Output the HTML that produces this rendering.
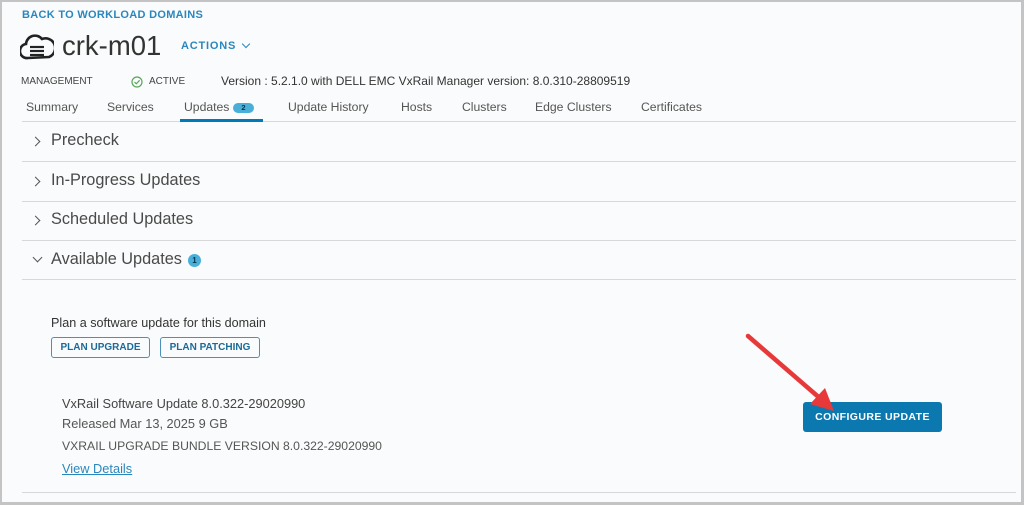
<!DOCTYPE html>
<html><head><style>
*{margin:0;padding:0;box-sizing:border-box}
body{width:1024px;height:505px;overflow:hidden;background:#fafbfc;font-family:"Liberation Sans",sans-serif;color:#444;position:relative}
.frame{position:absolute;left:0;top:0;width:1024px;height:505px;border:2px solid #c4c4c4;border-right-width:3px;border-bottom-width:3px}
.a{position:absolute;white-space:nowrap}
.line{position:absolute;left:22px;right:8px;height:1px;background:#d8d8d8}
.sec{position:absolute;left:51px;font-size:16.3px;color:#4a4a4a}
.chev{position:absolute;left:32px;width:7px;height:7px;border-right:1.6px solid #555;border-top:1.6px solid #555;transform:rotate(45deg)}
.btn{position:absolute;height:21px;border:1px solid #4a90b8;border-radius:3px;color:#1c6a97;font-size:10px;font-weight:bold;line-height:19px;text-align:center}
</style></head><body>
<div class="a" style="left:22px;top:9px;font-size:11px;font-weight:bold;color:#2a87bd;letter-spacing:.3px">BACK TO WORKLOAD DOMAINS</div>
<svg class="a" style="left:20px;top:31px" width="34" height="30" viewBox="0 0 34 30"><path d="M8 27 A7 7 0 0 1 6 13 A9 9 0 0 1 22 8 A8 8 0 0 1 29 26 Z" fill="none" stroke="#222" stroke-width="2.6"/><g stroke="#222" stroke-width="2.2"><line x1="10" y1="16" x2="24" y2="16"/><line x1="10" y1="20" x2="24" y2="20"/><line x1="10" y1="24" x2="24" y2="24"/></g></svg>
<div class="a" style="left:62px;top:30px;font-size:27.5px;color:#333">crk-m01</div>
<div class="a" style="left:181px;top:40px;font-size:11px;font-weight:bold;color:#2a87bd;letter-spacing:.8px">ACTIONS</div>
<div class="a" style="left:243px;top:41px;width:6px;height:6px;border-right:1.6px solid #2a87bd;border-bottom:1.6px solid #2a87bd;transform:rotate(45deg)"></div>
<div class="a" style="left:21px;top:76px;font-size:10px;color:#444">MANAGEMENT</div>
<svg class="a" style="left:131px;top:76px" width="12" height="12"><circle cx="6" cy="6" r="5" fill="none" stroke="#5aa55a" stroke-width="1.2"/><path d="M3.5 6 L5.3 7.8 L8.6 4.3" fill="none" stroke="#5aa55a" stroke-width="1.2"/></svg>
<div class="a" style="left:149px;top:76px;font-size:10px;color:#444">ACTIVE</div>
<div class="a" style="left:221px;top:74px;font-size:12px;color:#333">Version : 5.2.1.0 with DELL EMC VxRail Manager version: 8.0.310-28809519</div>
<div class="a" style="top:100px;font-size:12.2px;color:#555;left:26px">Summary</div>
<div class="a" style="top:100px;font-size:12.2px;color:#555;left:107px">Services</div>
<div class="a" style="top:100px;font-size:12.2px;color:#555;left:184px">Updates</div>
<div class="a" style="left:233px;top:103px;width:21px;height:10px;border-radius:5px;background:#49afd9;color:#06324a;font-size:7.5px;font-weight:bold;text-align:center;line-height:10px">2</div>
<div class="a" style="top:100px;font-size:12.2px;color:#555;left:288px">Update History</div>
<div class="a" style="top:100px;font-size:12.2px;color:#555;left:401px">Hosts</div>
<div class="a" style="top:100px;font-size:12.2px;color:#555;left:462px">Clusters</div>
<div class="a" style="top:100px;font-size:12.2px;color:#555;left:535px">Edge Clusters</div>
<div class="a" style="top:100px;font-size:12.2px;color:#555;left:641px">Certificates</div>
<div class="line" style="top:121px"></div>
<div class="a" style="left:180px;top:119px;width:83px;height:3px;background:#0079b8"></div>
<div class="chev" style="top:138px"></div><div class="sec" style="top:131px">Precheck</div>
<div class="line" style="top:161px"></div>
<div class="chev" style="top:178px"></div><div class="sec" style="top:171px">In-Progress Updates</div>
<div class="line" style="top:201px"></div>
<div class="chev" style="top:217px"></div><div class="sec" style="top:210px">Scheduled Updates</div>
<div class="line" style="top:240px"></div>
<div class="a" style="left:34px;top:254px;width:7px;height:7px;border-right:1.6px solid #555;border-bottom:1.6px solid #555;transform:rotate(45deg)"></div>
<div class="sec" style="top:250px">Available Updates</div>
<div class="a" style="left:188px;top:254px;width:13px;height:13px;border-radius:50%;background:#49afd9;color:#06324a;font-size:8px;font-weight:bold;text-align:center;line-height:13px">1</div>
<div class="line" style="top:279px"></div>
<div class="a" style="left:51px;top:316px;font-size:12.6px;color:#333">Plan a software update for this domain</div>
<div class="btn" style="left:51px;top:337px;width:99px">PLAN UPGRADE</div>
<div class="btn" style="left:160px;top:337px;width:100px">PLAN PATCHING</div>
<div class="a" style="left:62px;top:396px;font-size:12.8px;color:#444">VxRail Software Update 8.0.322-29020990</div>
<div class="a" style="left:62px;top:416px;font-size:12.8px;color:#555">Released Mar 13, 2025 9 GB</div>
<div class="a" style="left:62px;top:439px;font-size:12.2px;color:#555">VXRAIL UPGRADE BUNDLE VERSION 8.0.322-29020990</div>
<div class="a" style="left:62px;top:461px;font-size:12.8px;color:#2a87bd;text-decoration:underline">View Details</div>
<div class="a" style="left:803px;top:402px;width:139px;height:30px;background:#0b79b0;border-radius:3px;color:#fff;font-size:10.5px;font-weight:bold;text-align:center;line-height:30px;letter-spacing:.4px">CONFIGURE UPDATE</div>
<svg class="a" style="left:740px;top:330px" width="110" height="90"><line x1="8" y1="6" x2="82" y2="70" stroke="#e8393a" stroke-width="4.5" stroke-linecap="round"/><path d="M94 81 L70 74 L85 58 Z" fill="#e8393a"/></svg>
<div class="line" style="top:492px"></div>
<div class="frame"></div>
</body></html>
